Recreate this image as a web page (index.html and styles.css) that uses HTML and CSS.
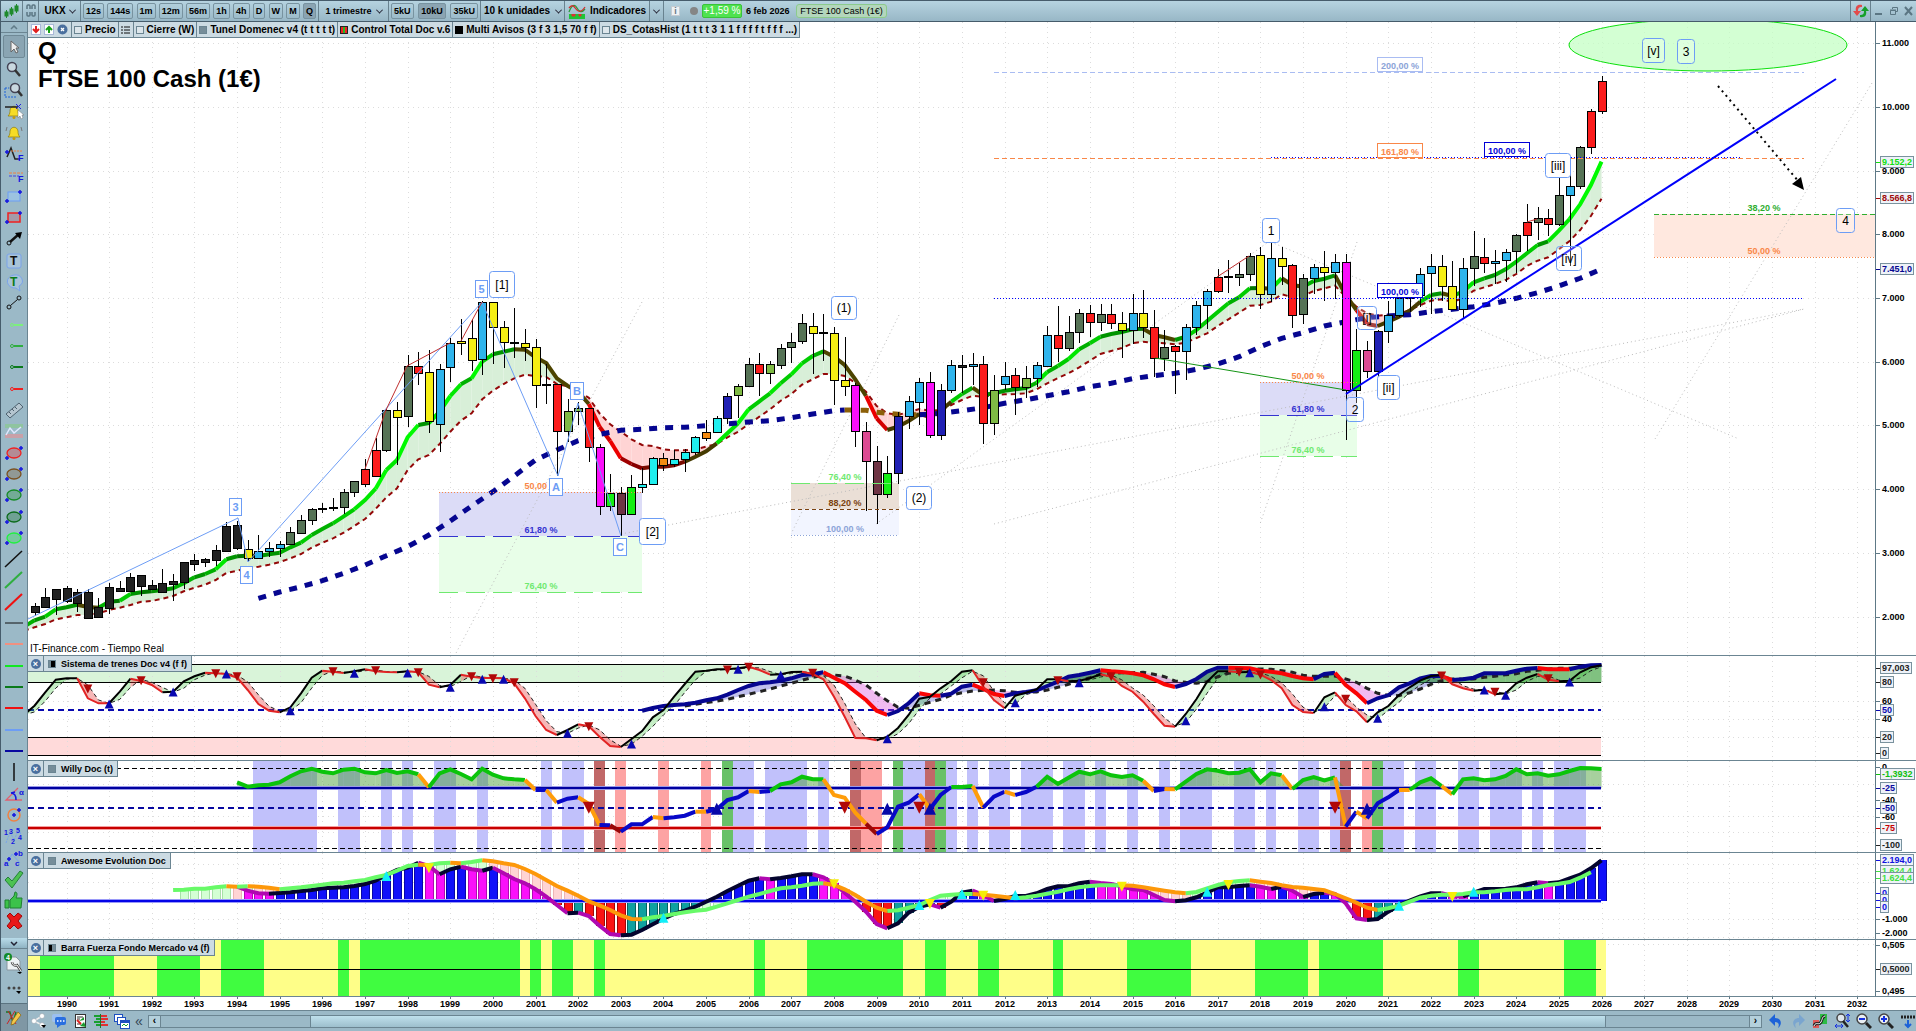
FILE: index.html
```html
<!DOCTYPE html>
<html lang="es">
<head>
<meta charset="utf-8">
<title>UKX - FTSE 100 Cash (1€)</title>
<link rel="stylesheet" href="styles.css">
</head>
<body>
<header class="topbar">
  <div class="cell cell-candles"><svg width="18" height="18" viewBox="0 0 18 18"><g fill="#1f8a2c" stroke="#1f8a2c"><path d="M3.500 8v8M8.500 5v9M13.500 2v9"/><rect x="2" y="10" width="3" height="4"/><rect x="7" y="7" width="3" height="5"/><rect x="12" y="4" width="3" height="5"/></g></svg></div>
  <div class="cell cell-link"><svg width="10" height="16" viewBox="0 0 10 16" fill="none" stroke="#5b7683" stroke-width="1.500"><path d="M1 6V3a1 1 0 0 1 1-1h1a1 1 0 0 1 1 1v3M6 6V3a1 1 0 0 1 1-1h1a1 1 0 0 1 1 1v3M1 9v3a1 1 0 0 0 1 1h1a1 1 0 0 0 1-1V9M6 9v3a1 1 0 0 0 1 1h1a1 1 0 0 0 1-1V9"/></svg></div>
  <button class="cell drop cell-symbol">UKX<i class="chev"></i></button>
  <div class="cell periods">
    <button>12s</button><button>144s</button><button>1m</button><button>12m</button><button>56m</button><button>1h</button><button>4h</button><button>D</button><button>W</button><button>M</button><button class="on">Q</button>
  </div>
  <button class="cell drop cell-tf">1 trimestre<i class="chev"></i></button>
  <div class="cell periods units"><button>5kU</button><button class="on">10kU</button><button>35kU</button></div>
  <button class="cell drop cell-units">10 k unidades<i class="chev"></i></button>
  <button class="cell drop cell-ind"><svg width="18" height="17" viewBox="0 0 18 17"><path d="M1 9c3-8 6-8 8-4s5 5 8 1" fill="none" stroke="#2a9a3a" stroke-width="1.300"/><path d="M1 5c3-4 5-2 7 1s5 4 9-2" fill="none" stroke="#d03030" stroke-width="1.300"/><rect x="1" y="11" width="16" height="5" fill="#1fc437"/><path d="M4 11v2h3v-2M11 11v2h2v-2" fill="#d33" stroke="#d33"/></svg>Indicadores</button>
  <button class="cell drop cell-more" aria-label="Más"><i class="chev"></i></button>
  <div class="status">
    <span class="info">i</span><span class="dot"></span><span class="pct">+1,59 %</span><b>6 feb 2026</b><span class="name">FTSE 100 Cash (1€)</span>
  </div>
  <button class="cell cell-sync" aria-label="Actualizar"><svg width="18" height="16" viewBox="0 0 18 16"><path d="M10 2C5 1 3 4 4 8H1l4 5 4-5H6c0-3 1-4 4-4z" fill="#e24b4b"/><path d="M8 14c5 1 7-2 6-6h3l-4-5-4 5h3c0 3-1 4-4 4z" fill="#16a02a"/></svg></button>
  <div class="win">
    <button aria-label="Minimizar"><svg width="10" height="10"><path d="M1 8h7" stroke="#5b7683" stroke-width="2"/></svg></button>
    <button aria-label="Restaurar"><svg width="10" height="10" fill="none" stroke="#5b7683"><path d="M3.500 3V1.500h5v4H7M1.500 4.500h5v4h-5zM1 4h6"/></svg></button>
    <button aria-label="Cerrar"><svg width="10" height="10"><path d="M1 1l7 8M8 1L1 9" stroke="#5b7683" stroke-width="2"/></svg></button>
  </div>
</header>
<div class="work">
  <nav class="side" aria-label="Herramientas">
    <button class="scroll up" aria-label="Subir"><svg width="8" height="5"><path d="M1 4l3-3 3 3" fill="none" stroke="#607b88" stroke-width="1.500"/></svg></button>
    <div class="tools" id="tools"></div>
    <button class="scroll" aria-label="Bajar"><svg width="8" height="5"><path d="M1 1l3 3 3-3" fill="none" stroke="#223" stroke-width="1.500"/></svg></button>
    <button class="tool big" aria-label="Notas"><svg width="20" height="22" viewBox="0 0 20 22"><path d="M3 5h9l4 4v9H3z" fill="#eef2f5" stroke="#8a97a0"/><circle cx="4" cy="5" r="4" fill="#128a2a"/><text x="4" y="8" class="n4" text-anchor="middle">4</text><path d="M8 10c0 3 3 4 5 3l4 6" fill="none" stroke="#444" stroke-width="2.500"/><path d="M8 10c0 3 3 4 5 3l4 6" fill="none" stroke="#fff"/><path d="M13 20h5l-2 2z"/></svg></button>
    <button class="tool big" aria-label="Más herramientas"><svg width="20" height="12" viewBox="0 0 20 12"><circle cx="5" cy="4" r="1.500" fill="#444"/><circle cx="10" cy="4" r="1.500" fill="#444"/><circle cx="15" cy="4" r="1.500" fill="#444"/><path d="M12 7h5l-2 3z"/></svg></button>
    <button class="tool draw" aria-label="Dibujar"><svg width="18" height="18" viewBox="0 0 18 18"><path d="M1 3h4l3 11 3-11" fill="none" stroke="#177a25" stroke-width="1.300"/><path d="M3 2l8 13M10 2L2 15" stroke="#c22" fill="none"/><path d="M13 3l3 3-7 9-3 1 1-4z" fill="#f3c64a" stroke="#8a6410" stroke-width=".7"/></svg></button>
  </nav>
  <main class="charts">
    <section class="panel price"><svg class="plot" id="price"></svg><svg class="axis" id="price-axis"></svg>
      <div class="legend">
        <span class="box arrows"><svg width="10" height="11" viewBox="0 0 10 11"><rect x=".5" y=".5" width="9" height="10" fill="#fff" stroke="#a9b8d8"/><path d="M5 2v6M2 5l3 3 3-3" stroke="#e02020" stroke-width="2" fill="none"/></svg><svg width="10" height="11" viewBox="0 0 10 11"><rect x=".5" y=".5" width="9" height="10" fill="#fff" stroke="#a9b8d8"/><path d="M5 9V3M2 6l3-3 3 3" stroke="#18a018" stroke-width="2" fill="none"/></svg><svg width="11" height="11" viewBox="0 0 11 11"><circle cx="5.500" cy="5.500" r="5" fill="#4a6f9e"/><path d="M4 4l3 3M7 4L4 7" stroke="#fff" stroke-width="1.300"/></svg></span>
        <span class="box"><i class="sw"></i>Precio</span>
        <span class="box"><svg width="10" height="8"><path d="M0 1h2M3 1h6M0 4h2M3 4h6M0 7h2M3 7h6" stroke="#111"/></svg></span>
        <span class="box"><i class="sw"></i>Cierre (W)</span>
        <span class="box"><i class="sw grey"></i>Tunel Domenec v4 (t t t t t)</span>
        <span class="box"><i class="sw multi"></i>Control Total Doc v.6</span>
        <span class="box"><i class="sw black"></i>Multi Avisos (3 f 3 1,5 70 f f)</span>
        <span class="box"><i class="sw"></i>DS_CotasHist (1 t t t 3 1 1 f f f f t f f f ...)</span>
      </div>
      <h1 class="title">Q<br>FTSE 100 Cash (1€)</h1>
      <p class="source">IT-Finance.com - Tiempo Real</p>
    </section>
    <section class="panel trenes"><svg class="plot" id="trenes"></svg><svg class="axis" id="trenes-axis"></svg>
      <div class="legend sub"><button class="box x" aria-label="Cerrar"></button><span class="box"><i class="sw half"></i>Sistema de trenes Doc v4 (f f)</span></div></section>
    <section class="panel willy"><svg class="plot" id="willy"></svg><svg class="axis" id="willy-axis"></svg>
      <div class="legend sub"><button class="box x" aria-label="Cerrar"></button><span class="box"><i class="sw grey"></i>Willy Doc (t)</span></div></section>
    <section class="panel awesome"><svg class="plot" id="awesome"></svg><svg class="axis" id="awesome-axis"></svg>
      <div class="legend sub"><button class="box x" aria-label="Cerrar"></button><span class="box"><i class="sw grey"></i>Awesome Evolution Doc</span></div></section>
    <section class="panel barra"><svg class="plot" id="barra"></svg><svg class="axis" id="barra-axis"></svg>
      <div class="legend sub"><button class="box x" aria-label="Cerrar"></button><span class="box"><i class="sw half2"></i>Barra Fuerza Fondo Mercado v4 (f)</span></div></section>
    <section class="panel years"><svg class="plot" id="years"></svg><div class="axis corner"></div></section>
    <footer class="foot">
      <button aria-label="Compartir"><svg width="16" height="16" viewBox="0 0 16 16"><path d="M12 3L4 8l8 4" fill="none" stroke="#eee" stroke-width="1.500"/><g fill="#fff" stroke="#8a97a0" stroke-width=".5"><circle cx="12" cy="3" r="2.500"/><circle cx="4" cy="8" r="2.500"/><circle cx="12" cy="12" r="2.500"/></g><path d="M11 12h5l-2 3z"/></svg></button>
      <button aria-label="Chat"><svg width="16" height="16" viewBox="0 0 16 16"><rect x="1" y="1" width="10" height="8" rx="2" fill="#9cc0f0"/><rect x="4" y="4" width="11" height="8" rx="2" fill="#2a6fe0"/><path d="M6 12v3l4-3z" fill="#2a6fe0"/><path d="M6 8h1.500M9 8h1.500M12 8h1.500" stroke="#fff" stroke-width="1.500"/></svg></button>
      <button aria-label="Informe"><svg width="14" height="16" viewBox="0 0 14 16"><rect x="2.500" y="1.500" width="10" height="13" fill="#fff" stroke="#333"/><path d="M4 4h6M4 6h3M4 11h4" stroke="#333"/><path d="M6 8l5-4v3zM7 13l4-4 2 5z" fill="#1d9a2d"/><path d="M4 7l4 4" stroke="#d22" stroke-width="2"/></svg></button>
      <button aria-label="Libro de órdenes"><svg width="16" height="16" viewBox="0 0 16 16"><path d="M1 3h6M3 6h4M1 9h6M3 12h4" stroke="#18a030" stroke-width="2"/><path d="M8 3h6M8 6h7M8 9h4M8 12h7" stroke="#e03030" stroke-width="2"/><path d="M7.500 1v14" stroke="#187a28"/></svg></button>
      <button aria-label="Ventanas"><svg width="16" height="16" viewBox="0 0 16 16"><g fill="#fff" stroke="#1d4fc0"><rect x=".5" y="1.500" width="8" height="7"/><rect x="3.500" y="4.500" width="8" height="7"/><rect x="6.500" y="7.500" width="9" height="8"/></g><path d="M7 9h8" stroke="#1d4fc0" stroke-width="2"/><path d="M8 13l2-2 2 2 2-2" fill="none" stroke="#18a030"/></svg></button>
      <span class="fold">«</span>
      <div class="hscroll"><button aria-label="Izquierda">‹</button><i class="before"></i><i class="thumb"></i><i class="after"></i><button aria-label="Derecha">›</button></div>
      <button class="r" aria-label="Deshacer"><svg width="16" height="16" viewBox="0 0 16 16"><path d="M7 1v4c6 0 8 6 3 10 2-4 0-6-3-6v4L1 7z" fill="#1d62d8"/></svg></button>
      <button class="r" aria-label="Rehacer"><svg width="16" height="16" viewBox="0 0 16 16"><path d="M9 1v4C3 5 1 11 6 15c-2-4 0-6 3-6v4l6-6z" fill="#7aa5cf"/></svg></button>
      <button class="r" aria-label="Ajustar"><svg width="16" height="16" viewBox="0 0 16 16"><rect x="1" y="7" width="6" height="8" fill="#e05a5a"/><rect x="8" y="1" width="7" height="10" fill="#2dbb45"/><path d="M2 13c2-5 5 0 7-4s1-5 4-6" stroke="#222" stroke-width="3" fill="none"/><path d="M2 13c2-5 5 0 7-4s1-5 4-6" stroke="#fff" fill="none"/></svg></button>
      <button class="r" aria-label="Escala"><svg width="16" height="16" viewBox="0 0 16 16"><circle cx="7" cy="5" r="4" fill="#dfe8ee" stroke="#444" stroke-width="1.500"/><path d="M9 8l5 6" stroke="#222" stroke-width="2.500"/><path d="M1 13h8M1 13l2-2M1 13l2 2M9 13l-2-2M9 13l-2 2M14 1v8M14 1l-2 2M14 1l2 2M14 9l-2-2M14 9l2-2" stroke="#1530e0" fill="none"/></svg></button>
      <button class="r" aria-label="Alejar"><svg width="16" height="16" viewBox="0 0 16 16"><circle cx="6" cy="6" r="5" fill="#e8eef2" stroke="#444" stroke-width="1.500"/><path d="M10 10l5 5" stroke="#222" stroke-width="3"/><path d="M3 6h6" stroke="#1530e0" stroke-width="2"/></svg></button>
      <button class="r" aria-label="Acercar"><svg width="16" height="16" viewBox="0 0 16 16"><circle cx="6" cy="6" r="5" fill="#e8eef2" stroke="#444" stroke-width="1.500"/><path d="M10 10l5 5" stroke="#222" stroke-width="3"/><path d="M3 6h6M6 3v6" stroke="#1530e0" stroke-width="2"/></svg></button>
      <button class="r" aria-label="Espaciado"><svg width="16" height="16" viewBox="0 0 16 16"><path d="M1 4h14" stroke="#222" stroke-width="3" stroke-dasharray="2 1"/><path d="M8 7v6M5 11l3 3 3-3" stroke="#1d62d8" stroke-width="2" fill="none"/></svg></button>
    </footer>
  </main>
</div>
<script src="chart.js"></script>
</body>
</html>
```
FILE: styles.css
```css
* { box-sizing: border-box; }
html, body { height: 100%; }
body { margin: 0; display: flex; flex-direction: column; overflow: hidden; background: #fff; font: 10px/12px "Liberation Sans", Arial, sans-serif; color: #000; }
button { font: inherit; color: inherit; padding: 0; margin: 0; border: 0; background: none; display: flex; align-items: center; justify-content: center; }
svg { display: block; flex: none; }

.topbar { height: 22px; flex: none; display: flex; background: linear-gradient(#b6d3e0, #98b7c6); border: solid #465c6b; border-width: 1px 0 1px 1px; }
.cell { flex: none; display: flex; align-items: center; justify-content: center; border-right: 1px solid #68828f; font-weight: bold; white-space: nowrap; }
.cell-candles { width: 22px; }
.cell-link { width: 16px; }
.cell-symbol { width: 42px; gap: 4px; }
.chev { width: 5px; height: 5px; border: solid #223; border-width: 0 1px 1px 0; transform: rotate(45deg) translate(-1px, -1px); }
.periods { gap: 3px; padding: 0 2px; font-size: 9px; width: 238px; justify-content: space-between; }
.periods button { height: 16px; padding: 0 2px; border: 1px solid #7893a0; border-radius: 2px; font-weight: bold; }
.periods .on { background: #8ba4b2; }
.cell-tf { width: 70px; gap: 5px; font-size: 9px; }
.units { width: 92px; }
.cell-units { width: 84px; gap: 6px; }
.cell-ind { width: 85px; gap: 4px; }
.cell-more { width: 14px; }
.status { flex: 1; display: flex; align-items: center; gap: 4px; padding-left: 7px; font-size: 9px; white-space: nowrap; }
.info { width: 9px; height: 10px; margin-right: 6px; background: #eef2f4; color: #678; text-align: center; font-weight: bold; line-height: 9px; border: 1px solid #c3ccd2; }
.dot { width: 8px; height: 8px; border-radius: 4px; background: #858585; }
.pct { width: 40px; height: 14px; background: #4fe24f; color: #fff; font-size: 10px; border: 1px solid #39c339; border-radius: 2px; text-align: center; }
.status b { font-size: 9px; width: 46px; }
.name { width: 91px; height: 14px; background: #b3d6bc; border: 1px solid #8ccb8c; border-radius: 3px; text-align: center; }
.cell-sync { width: 21px; border-left: 1px solid #68828f; }
.win { width: 45px; flex: none; display: flex; align-items: center; justify-content: space-around; }

.work { flex: 1; display: flex; min-height: 0; }
.side { width: 28px; flex: none; display: flex; flex-direction: column; background: #9bb9c7; border: solid #6b8592; border-width: 0 1px; border-left-color: #465c6b; }
.scroll { height: 11px; flex: none; background: linear-gradient(#b9dcea, #8fb3c3); border-bottom: 1px solid #6b8592; }
.scroll.up { background: none; }
.tools { flex: 1; min-height: 0; display: flex; flex-direction: column; padding: 2px 2px 6px; }
.tool { flex: 1; min-height: 0; }
.tool.active { background: #8aa5b3; border: 1px solid #6f8996; border-radius: 2px; }
.tool.big { flex: none; height: 27px; }
.tool.draw { flex: none; height: 28px; background: #7f97a4; border-top: 1px solid #5b7380; }
.n4 { font: bold 7px "Liberation Sans", sans-serif; fill: #fff; }

.charts { flex: 1; min-width: 0; display: flex; flex-direction: column; }
.panel { position: relative; min-height: 0; display: flex; border-top: 1px solid #6b8592; }
.plot { flex: 1; min-width: 0; width: 0; height: 100%; }
.axis { width: 41px; height: 100%; border-left: 1px solid #5e7986; }
.price { flex: 633 1 0; border-top: 0; }
.trenes { flex: 104 1 0; }
.willy { flex: 91 1 0; }
.awesome { flex: 86 1 0; }
.barra { flex: 56 1 0; }
.years { flex: none; height: 14px; }
.years .axis { border-left: 0; }
.legend { position: absolute; left: 0; top: 0; display: flex; height: 16px; background: #ccdbe3; border-bottom: 1px solid #6b8592; font-weight: bold; white-space: nowrap; }
.box { display: flex; align-items: center; gap: 3px; padding: 0 2px; border-right: 1px solid #6b8592; }
.legend.sub { font-size: 9px; }
.sub .box { gap: 5px; padding: 0 4px; }
.arrows { gap: 3px; padding: 0 3px; }
.sw { width: 8px; height: 8px; border: 1px solid #6b8592; background: #dde6eb; }
.sw.grey { background: #768d99; }
.sw.black { background: #000; border-color: #000; }
.sw.multi { border-color: #222; background: linear-gradient(90deg, #e22 35%, #2b2 35% 70%, #e22 70%); }
.sw.half { background: linear-gradient(90deg, #768d99 40%, #000 40%); }
.sw.half2 { background: linear-gradient(90deg, #000 50%, #768d99 50%); }
.sub .box.x { width: 16px; padding: 0; }
.box.x::before { content: "×"; width: 10px; height: 10px; border-radius: 5px; background: #4a6f9e; color: #fff; line-height: 10px; text-align: center; }
.title { position: absolute; left: 10px; top: 15px; margin: 0; font-size: 24px; line-height: 28px; }
.source { position: absolute; left: 2px; bottom: 0; margin: 0; }

.foot { height: 21px; flex: none; display: flex; align-items: center; gap: 5px; padding-left: 2px; background: #9bb9c7; border-top: 1px solid #6b8592; }
.foot button { width: 16px; flex: none; }
.foot .r { width: 17px; }
.fold { width: 8px; color: #345; font-size: 14px; }
.hscroll { flex: 1; height: 13px; display: flex; border: 1px solid #6b8592; }
.hscroll button { width: 12px; background: #b4d0dc; border: solid #6b8592; border-width: 0 1px 0 0; font-weight: bold; }
.hscroll button:last-child { border-width: 0 0 0 1px; }
.before { flex: 150; }
.thumb { flex: 1298; background: linear-gradient(#bfe0ec, #9dbfcd); border: solid #6b8592; border-width: 0 1px; }
.after { flex: 144; }

.lbl { font: bold 9px "Liberation Sans", sans-serif; }
.wave { font: 12px "Liberation Sans", sans-serif; }
.wave.s { font-weight: bold; font-size: 11px; }
.crisp { shape-rendering: crispEdges; }
```
FILE: chart.js
```js
// ---- data: one entry per quarter, k = quarters since 1990; levels in thirds of a pixel ----
const CANDLES = `1088 1098 1115 1128 k|1045 1071 1100 1100 k|1047 1047 1077 1125 k|1038 1045 1082 1090 k|1047 1056 1088 1116 k|1048 1056 1133 1137 k|1074 1101 1130 1130 k|1029 1041 1103 1122 k|1022 1044 1052 1052 k|999 1011 1052 1052 k|1005 1005 1037 1068 k|1019 1035 1047 1047 k|988 1029 1057 1057 k|1003 1023 1031 1083 k|965 965 1025 1047 k|942 960 971 992 k|954 957 966 980 k|915 930 960 978 k|846 857 932 936 k|843 855 923 930 k|900 928 955 962 y|885 934 955 955 b|905 925 934 950 b|903 913 925 950 b|861 877 913 915 g|825 841 880 880 g|804 808 841 855 g|788 804 806 818 k|774 802 805 812 k|747 757 802 822 g|722 724 757 770 g|657 688 733 740 r|594 631 709 711 r|508 511 631 635 g|487 511 532 675 y|345 379 529 560 g|336 379 398 434 r|330 397 544 578 y|371 388 553 635 b|294 310 382 426 b|237 304 310 345 y|238 295 361 392 y|184 187 358 404 b|187 187 262 372 y|243 262 307 384 y|204 307 310 354 k|267 310 322 363 y|297 322 436 504 y|372 433 436 492 k|433 433 574 708 r|477 514 574 606 G|487 505 514 555 G|505 505 622 666 r|613 622 799 824 m|702 760 799 812 L|741 760 821 888 w|705 742 821 821 L|685 731 742 758 c|652 655 731 731 c|640 655 674 692 o|631 658 673 680 c|628 637 658 695 c|589 592 637 645 c|541 577 593 602 o|529 535 577 580 c|460 469 535 552 n|433 439 466 535 G|354 373 439 439 g|339 373 398 467 r|363 373 398 432 G|313 325 374 386 g|279 307 322 369 g|221 250 304 312 g|219 259 280 402 y|222 276 278 363 k|261 280 421 495 y|291 421 437 467 y|430 436 574 621 m|546 574 664 813 p|618 664 761 852 w|648 700 761 773 L|515 529 700 731 n|468 484 529 567 b|415 427 485 556 b|396 427 586 594 m|433 451 586 600 n|360 376 451 459 b|345 376 380 460 k|339 373 379 434 b|348 373 550 612 r|405 451 550 585 G|366 409 433 450 b|384 406 442 525 r|378 415 442 474 G|366 376 415 440 b|258 286 379 380 b|198 286 325 366 r|228 277 325 334 g|207 220 277 309 g|195 220 247 291 r|192 223 247 274 g|192 223 250 267 r|216 250 271 354 y|162 220 269 312 b|150 220 262 295 y|210 262 355 411 r|270 321 355 393 g|315 319 334 462 r|252 262 334 420 b|183 196 262 285 b|147 154 196 267 b|87 112 154 159 r|60 109 111 158 k|70 103 112 138 g|39 49 103 123 g|21 46 163 207 y|0 55 163 186 b|21 55 78 135 y|72 76 226 264 r|103 115 223 252 g|73 82 115 162 b|33 82 95 183 y|43 67 95 177 b|43 67 451 600 m|267 331 451 490 L|304 331 392 415 p|270 274 392 410 n|184 226 274 310 b|175 175 226 230 b|140 158 175 215 b|85 103 165 200 b|43 79 98 222 b|45 79 139 183 y|63 139 208 210 y|55 85 208 235 b|-27 49 85 138 g|-6 52 70 99 r|30 64 70 133 b|28 37 61 126 b|-17 -14 34 99 g|-108 -53 -14 33 r|-99 -65 -53 0 g|-93 -65 -47 -12 r|-210 -134 -47 -42 g|-220 -161 -134 78 b|-282 -278 -161 -153 g|-393 -386 -278 -258 r|-492 -476 -386 -378 r`
  .split('|').map((s, i) => { const p = s.split(' '); return { k: i - 3, h: +p[0], t: +p[1], b: +p[2], l: +p[3], c: p[4] }; });
const COLORS = { k: '#222', y: '#f5ef14', b: '#2fb4ec', g: '#567356', r: '#fb1c1c', G: '#7fba45', m: '#fb0ffb', L: '#14ee14', w: '#6e3444', n: '#2020b4', c: '#20eeee', o: '#f58b10', p: '#dc4a92' };

const FAST = [1160,1141,1130,1108,1102,1094,1101,1103,1085,1082,1062,1057,1054,1050,1045,1030,1012,1002,988,958,949,947,948,943,938,922,908,885,867,850,829,808,780,746,690,660,592,555,549,515,468,433,415,365,343,335,328,329,352,369,415,437,455,492,560,603,655,672,685,680,680,676,665,650,634,610,580,550,508,484,460,430,403,370,348,334,350,375,418,468,535,570,560,543,522,530,512,485,462,443,465,460,452,448,444,428,396,378,357,328,310,290,282,276,268,266,285,292,300,290,270,243,216,190,172,145,144,146,115,135,140,123,116,106,165,210,252,258,245,230,212,185,165,160,168,155,127,115,105,88,65,40,15,4,-28,-63,-107,-165,-235];
const SLOW = [1172,1162,1152,1138,1132,1125,1125,1120,1110,1103,1095,1085,1083,1076,1068,1054,1043,1034,1020,999,992,985,980,974,966,955,942,923,908,895,878,858,837,807,772,745,690,658,645,612,575,542,520,478,452,432,415,404,408,411,432,439,455,473,520,553,575,598,615,618,628,631,631,628,620,612,592,575,552,530,508,482,462,434,418,402,402,408,428,455,498,520,524,517,507,512,510,495,480,467,470,465,463,462,460,448,430,414,400,382,362,342,333,324,310,305,308,310,313,308,294,280,258,238,218,197,195,185,163,172,168,153,145,137,170,200,220,227,225,222,210,195,182,178,185,175,152,142,132,120,102,78,62,52,28,3,-30,-72,-124];
const TREND = [[18,1075],[20,1056],[22,1040],[24,1022],[26,1000],[28,975],[30,947],[32,920],[34,885],[36,843],[38,798],[40,755],[42,708],[44,660],[46,630],[48,602],[50,583],[52,571],[54,568],[56,563],[58,562],[60,557],[62,552],[64,546],[66,542],[68,533],[70,522],[72,512],[73,510],[75,511],[76,517],[78,523],[80,524],[82,520],[84,512],[86,503],[88,490],[90,479],[92,467],[94,455],[96,440],[98,430],[100,416],[102,407],[104,400],[106,388],[108,372],[110,350],[112,320],[114,295],[116,278],[118,258],[120,245],[122,233],[124,228],[126,224],[128,215],[130,208],[132,200],[134,190],[136,175],[138,158],[140,138],[142,115],[144,87]];

const ST = [225,197,157,119,115,115,175,190,190,155,116,123,135,157,155,124,109,98,100,102,113,150,192,212,217,202,160,113,92,95,99,94,88,94,96,97,94,97,134,142,135,104,110,114,114,115,130,175,228,270,285,270,253,259,290,318,321,297,273,232,210,170,132,95,92,88,88,85,80,90,104,103,96,95,102,118,170,230,294,295,301,290,264,225,176,170,145,123,95,91,140,180,205,167,158,148,118,118,124,122,115,103,110,138,155,185,222,257,260,222,177,125,94,94,97,96,104,120,145,195,216,219,172,157,195,214,247,217,198,165,142,122,108,105,133,145,152,149,163,160,130,113,102,119,124,122,97,82,76];
const TH = [212,204,198,195,193,188,181,175,164,150,138,130,127,122,115,105,103,97,113,130,155,180,212,225,213,190,160,166,167,161,140,134,147,162,168,160,156,151,138,125,110,105,98,91,94,96,100,106,118,133,141,132,117,95,83,83,84,85,92,95,100,108,115,118,102,98,135,160,190,175,166,142,130,115,108,108,120,118,113,100,100,100,92,86,84,88,88,88,80,76,75];
const TD = [198,193,188,183,178,170,163,155,147,138,130,121,112,106,105,108,120,135,160,182,202,205,196,187,178,165,158,153,151,150,152,157,157,156,150,142,133,122,113,103,100,98,98,97,103,110,123,127,130,125,110,100,96,88,87,88,92,97,106,109,109,108,117,127,145,160,166,167,158,147,133,122,117,117,117,112,109,104,101,94,91,87,85,85,84,80,76];

const WILLY = [427,440,436,434,427,409,394,386,395,400,389,386,397,400,390,399,394,403,442,400,388,402,418,386,404,415,418,420,450,450,488,476,472,492,555,556,575,553,553,531,535,532,527,515,515,508,480,472,453,456,453,433,427,410,418,418,465,473,518,551,582,562,500,488,463,507,465,441,441,438,503,470,455,465,456,440,410,432,413,395,403,394,406,411,406,422,453,447,448,425,402,388,392,400,398,388,427,400,406,447,420,411,421,412,560,515,535,490,472,450,450,427,415,438,463,418,415,421,418,408,388,403,400,407,403,393,384,385,387];
const ORANGE = [33,43,45,48,49,55,59,64,71,72,73,74,80,85,88,101,103,114,119,121,125,129];

const AS = [750,749,746,746,742,739,740,739,740,743,748,745,742,738,734,730,728,724,720,712,705,692,678,674,675,670,668,670,666,661,664,670,675,687,702,720,738,752,767,784,796,810,826,837,838,832,828,822,817,812,809,800,790,780,770,762,753,745,742,737,731,730,735,748,765,785,803,813,811,803,795,780,767,764,762,762,764,767,771,775,772,767,761,755,748,742,738,736,736,736,737,742,747,752,757,760,756,745,735,727,723,721,725,729,736,741,743,747,751,762,775,788,803,810,805,797,785,773,767,764,764,762,757,757,754,750,748,748,742,735,731,726,713,697];
const AM = [740,752,760,761,759,757,753,750,745,743,742,738,732,722,705,690,683,668,678,703,688,680,688,692,683,700,717,730,748,770,795,820,818,828,857,882,886,884,870,853,836,822,812,800,785,770,753,737,722,715,718,714,709,703,703,712,730,758,785,815,852,865,850,818,800,793,803,785,758,752,765,783,777,768,768,760,747,739,739,730,725,729,732,739,748,750,765,780,784,781,772,758,742,742,738,736,740,747,740,752,771,762,758,762,790,835,840,837,815,796,782,769,760,760,768,770,758,747,747,746,742,733,727,730,727,715,704,685,661];

// ---- drawing helpers ----
function plot(id, top, height, base) {
  const el = document.getElementById(id), w = el.clientWidth, h = el.clientHeight;
  const sx = w / 1847, sy = h / height;
  const p = { out: [], w, h, sx, sy, el,
    X: k => (38.5 + 10.66 * k) * sx,
    Y: t => (base + t / 3 - top) * sy,
    px: x => (x - 28) * sx,
    py: y => (y - top) * sy,
    add: s => p.out.push(s),
    line(x1, y1, x2, y2, a) { p.add(`<path d="M${x1} ${y1}L${x2} ${y2}" ${a}/>`); },
    hl(y, x1, x2, c, a = '') { const v = Math.round(p.py(y)) + (a.includes('stroke-width') ? 0 : .5); p.add(`<path class="crisp" d="M${p.px(x1)} ${v}H${p.px(x2)}" stroke="${c}" ${a}/>`); },
    rect(x1, y1, x2, y2, a) { const l = Math.round(x1), t = Math.round(y1); p.add(`<rect class="crisp" x="${l}" y="${t}" width="${Math.max(0, Math.round(x2) - l)}" height="${Math.max(0, Math.round(y2) - t)}" ${a}/>`); },
    pts: (v, from) => v.map((t, i) => [p.X(from + i), p.Y(t)]),
    path: (pts, a) => p.add(`<path d="M${pts.map(q => q[0].toFixed(1) + ' ' + q[1].toFixed(1)).join('L')}" fill="none" ${a}/>`),
    segs(pts, color, width) {
      let run = [pts[0]], cur = color(0);
      for (let i = 0; i < pts.length - 1; i++) {
        const c = color(i);
        if (c !== cur) { p.path(run, `stroke="${cur}" stroke-width="${width}"`); run = [pts[i]]; cur = c; }
        run.push(pts[i + 1]);
      }
      p.path(run, `stroke="${cur}" stroke-width="${width}"`);
    },
    between(a, b, color) {
      for (let i = 0; i < a.length - 1; i++) {
        const c = color(i);
        if (c) p.add(`<path d="M${a[i]}L${a[i + 1]}L${b[i + 1]}L${b[i]}Z" fill="${c}"/>`);
      }
    },
    tri(k, t, up, c, s = 5) { const x = p.X(k), y = p.Y(t), d = up ? s : -s; p.add(`<path d="M${x - s} ${y + d}H${x + s}L${x} ${y - d}Z" fill="${c}"/>`); },
    text(x, y, s, c, anchor = 'middle', cls = 'lbl') { p.add(`<text class="${cls}" x="${x}" y="${y}" fill="${c}" text-anchor="${anchor}">${s}</text>`); },
    years() { for (let y = 0; y <= 42; y++) { const x = Math.round(p.X(y * 4)) + .5; p.add(`<path class="crisp" d="M${x} 0V${h}" stroke="#dcdcdc" stroke-dasharray="1 4"/>`); } },
    gridH(ys) { ys.forEach(y => p.hl(y, 28, 1875, '#dcdcdc', 'stroke-dasharray="1 4"')); },
    done() { el.innerHTML = p.out.join(''); }
  };
  return p;
}
const rising = (v, up, down) => { let last = up; return v.slice(1).map((t, i) => (last = t < v[i] ? up : t > v[i] ? down : last)); };

function axis(id, top, height, ticks, boxes) {
  const el = document.getElementById(id), sy = el.clientHeight / height;
  const Y = y => Math.round((y - top) * sy);
  let s = ticks.map(([t, y]) => `<path class="crisp" d="M0 ${Y(y) + .5}h4" stroke="#5e7986"/><text class="lbl" x="6" y="${Y(y) + 3}">${t}</text>`).join('');
  s += boxes.map(([t, y, c, w]) => `<path class="crisp" d="M0 ${Y(y) + .5}h4" stroke="${c}"/><rect class="crisp" x="4.500" y="${Y(y) - 5.5}" width="${w}" height="11" fill="#eef2f8" stroke="#7a929e"/><text class="lbl" x="6" y="${Y(y) + 3}" fill="${c}">${t}</text>`).join('');
  el.innerHTML = s;
}

function drawPrice() {
  const p = plot('price', 22, 633, 240), { X, Y, px, py } = p;
  const prices = [11, 10, 9, 8, 7, 6, 5, 4, 3, 2].map(n => [n + '.000', 298 + (7 - n) * 63.7]);
  p.years(); p.gridH(prices.map(q => q[1]));
  // projection zones
  [[439, 492, 642, 536, '#dcdcf7'], [439, 536, 642, 592, '#e8fee8'], [791, 483, 899, 509, '#eadfd6'], [791, 509, 899, 535, '#f2f5ff'],
   [1260, 382, 1357, 415, '#dcdcf7'], [1260, 415, 1357, 456, '#e8fee8'], [1654, 214, 1875, 257, '#ffe8df']]
    .forEach(([a, b, c, d, f]) => p.rect(px(a), py(b), px(c), py(d), `fill="${f}"`));
  [[642,302,455,655],[899,315,791,534],[621,534,1804,309],[994,524,1804,309],[876,524,1271,240],[1271,242,1739,439],[1357,242,1260,524],[1872,83,1655,439]]
    .forEach(([a, b, c, d]) => p.line(px(a), py(b), px(c), py(d), 'stroke="#bcbcbc" stroke-dasharray="1 3"'));
  p.add(`<ellipse cx="${px(1708)}" cy="${py(45)}" rx="${139 * p.sx}" ry="${26 * p.sy}" fill="#c4ffc4" fill-opacity=".75" stroke="#0de00d"/>`);
  // cloud and averages
  const f = p.pts(FAST, -4), s = p.pts(SLOW, -4);
  p.between(f, s, i => (FAST[i] + FAST[i + 1] <= SLOW[i] + SLOW[i + 1]) ? '#d8efd8' : '#ffd4d4');
  p.path(s, 'stroke="#930808" stroke-width="2" stroke-dasharray="5 4"');
  p.segs(f, i => {
    const d = FAST[i] - FAST[i + 1], above = FAST[i] <= SLOW[i];
    if (d >= 0) return above ? `rgb(0,${Math.min(250, 120 + Math.round(d / 8) * 28)},0)` : (i < 62 ? '#7a0c00' : '#453a00');
    return above ? '#4d4400' : `rgb(${Math.min(235, 110 + Math.round(-d / 10) * 25)},0,0)`;
  }, 4);
  const tr = TREND.map(q => [X(q[0]), Y(q[1])]), dash = 'stroke-width="5" stroke-dasharray="8 8"';
  p.path(tr.slice(0, 29), `stroke="#060690" ${dash}`);
  p.path(tr.slice(28, 33), `stroke="#8c6008" ${dash}`);
  p.path(tr.slice(32), `stroke="#060690" ${dash}`);
  CANDLES.forEach(c => {
    const x = Math.round(X(c.k)), t = Math.round(Y(c.t)), b = Math.max(t + 1, Math.round(Y(c.b)));
    p.add(`<path class="crisp" d="M${x + .5} ${Math.round(Y(c.h))}V${Math.round(Y(c.l))}" stroke="#000"/><rect class="crisp" x="${x - 3.5}" y="${t + .5}" width="8" height="${b - t}" fill="${COLORS[c.c]}" stroke="#000"/>`);
  });
  const poly = (a, attr) => p.path(a.map(([x, y]) => [px(x), py(y)]), attr);
  const blue = 'stroke="#6d9df5"', red = 'stroke="#c03030"';
  poly([[28, 619], [238, 518], [248, 562], [482, 302], [558, 476], [578, 403], [621, 536]], blue);
  poly([[365, 469], [386, 410], [407, 366], [450, 343]], red);
  poly([[461, 341], [482, 302]], red);
  poly([[1217, 277], [1249, 256]], red);
  poly([[1527, 222], [1537, 219]], red);
  poly([[1155, 358], [1346, 390]], 'stroke="#149414"');
  poly([[1346, 394], [1836, 79]], 'stroke="#0000fa" stroke-width="2"');
  poly([[1718, 86], [1799, 182]], 'stroke="#000" stroke-width="2" stroke-dasharray="2 4"');
  p.add(`<path d="M${px(1804)} ${py(190)}l-12 -6l9 -7z"/>`);
  // level lines
  p.hl(72, 994, 1804, '#a9bcf2', 'stroke-dasharray="5 3"');
  p.hl(158, 994, 1804, '#f98748', 'stroke-dasharray="5 3"');
  p.hl(157, 1271, 1740, '#0000ff', 'stroke-dasharray="1 2"');
  p.hl(298, 994, 1804, '#0000ff', 'stroke-dasharray="1 2"');
  const OR = '#f98748', BL = '#3434d0', GR = '#6fe96f', BR = '#7a4210', LB = '#8ca4d8';
  [[492, 439, 642, OR, '1 2'], [536, 439, 642, BL, '19 8'], [592, 439, 642, GR, '19 8'], [483, 791, 899, GR, '19 8'], [509, 791, 899, BR, '4 3'], [535, 791, 899, LB, '1 2'],
   [382, 1260, 1357, OR, '1 2'], [415, 1260, 1357, BL, '19 8'], [456, 1260, 1357, GR, '19 8'], [214, 1654, 1875, '#2fae2f', '5 3'], [257, 1654, 1875, OR, '1 2']]
    .forEach(([y, a, b, c, d]) => p.hl(y, a, b, c, `stroke-dasharray="${d}"`));
  [[541, 489, '50,00 %', OR], [541, 533, '61,80 %', BL], [541, 589, '76,40 %', GR], [845, 480, '76,40 %', GR], [845, 506, '88,20 %', BR], [845, 532, '100,00 %', LB],
   [1308, 379, '50,00 %', OR], [1308, 412, '61,80 %', BL], [1308, 453, '76,40 %', GR], [1764, 211, '38,20 %', '#2fae2f'], [1764, 254, '50,00 %', OR]]
    .forEach(([x, y, t, c]) => p.text(px(x), py(y), t, c));
  [[1400, 57, '200,00 %', LB, '#a9bcf2'], [1400, 143, '161,80 %', OR, OR], [1507, 142, '100,00 %', '#0000d8', '#0000d8'], [1400, 283, '100,00 %', '#0000d8', '#0000d8']]
    .forEach(([x, y, t, c, b]) => { const l = Math.round(px(x)) - 22.5, m = Math.round(py(y)) + .5; p.add(`<rect x="${l}" y="${m}" width="45" height="14" fill="#fff" stroke="${b}"/>`); p.text(l + 22.5, m + 11, t, c); });
  // wave counts: x, y, w, h, text, style (s = small, n = see-through)
  [[490,271,25,26,'[1]',''],[476,280,12,17,'5','s'],[230,498,12,17,'3','s'],[241,566,12,17,'4','s'],[550,478,13,17,'A','s'],[571,382,13,17,'B','s'],[614,538,13,17,'C','s'],[640,518,26,26,'[2]',''],[832,296,25,23,'(1)',''],[907,486,25,23,'(2)',''],[1263,218,17,24,'1',''],[1347,397,17,24,'2','n'],[1378,375,22,24,'[ii]',''],[1358,306,19,23,'[i]','n'],[1546,153,25,24,'[iii]',''],[1557,246,25,24,'[iv]','n'],[1643,38,22,24,'[v]','n'],[1678,39,17,24,'3','n'],[1837,208,18,24,'4','n']]
    .forEach(([x, y, w, h, t, k]) => {
      const l = Math.round(px(x)) - .5, m = Math.round(py(y)) + .5;
      p.add(`<rect x="${l}" y="${m}" width="${w}" height="${h}" rx="${k === 's' ? 0 : 3}" fill="#fff" fill-opacity="${k === 'n' ? .25 : 1}" stroke="#6d9df5"/>`);
      p.text(l + w / 2, m + h / 2 + 4, t, k === 's' ? '#6d9df5' : '#000', 'middle', 'wave ' + k);
    });
  p.done();
  axis('price-axis', 22, 633, prices, [['9.152,2', 162, '#10e010', 33], ['8.566,8', 198, '#a00808', 33], ['7.451,0', 269, '#060690', 33]]);
}

function drawTrenes() {
  const p = plot('trenes', 656, 104, 640), { X, Y, px } = p, end = 1601;
  p.rect(0, Y(72), px(end), Y(127), 'fill="#d9f4d9"');
  p.rect(0, Y(292), px(end), Y(346), 'fill="#ffdada"');
  p.years(); p.gridH([701, 719, 737]);
  [664, 682, 737, 755].forEach(y => p.hl(y, 28, end, '#000'));
  p.hl(710, 28, end, '#0808b0', 'stroke-width="2" stroke-dasharray="6 4"');
  const st = p.pts(ST, -4), sg = p.pts(ST.map((v, i) => (v + (ST[i - 1] || v) * 2) / 3), -4);
  const th = p.pts(TH, 54), td = p.pts(TD, 58), thc = TH.slice(4);
  p.between(th.slice(4), td, i => thc[i] + thc[i + 1] <= TD[i] + TD[i + 1] ? 'rgba(30,30,190,.28)' : 'rgba(215,60,215,.35)');
  const lim = Y(127), a = th.slice(38).map(q => [q[0], Math.min(q[1], lim)]);
  p.between(a, a.map(q => [q[0], lim]), () => 'rgba(20,130,20,.45)');
  const c = rising(ST, '#000', '#e22424');
  p.between(st, sg, i => c[i] === '#000' ? 'rgba(60,200,60,.3)' : 'rgba(230,50,50,.35)');
  p.path(sg, 'stroke="#222" stroke-dasharray="4 3"');
  p.path(td, 'stroke="#222" stroke-width="3" stroke-dasharray="6 5"');
  const tc = rising(TH, '#060690', '#fa0505'); p.segs(th, i => tc[i], 4);
  p.segs(st, i => c[i], 2);
  [[2,147],[7,122],[14,101],[16,110],[25,95],[29,92],[33,98],[38,110],[40,116],[42,128],[49,260],[62,90],[64,82],[70,100],[86,128],[93,122],[98,110],[110,97],[112,105],[120,178],[129,108],[134,157],[139,116]].forEach(q => p.tri(q[0], q[1], false, '#b00808', 4.5));
  [[4,192],[10,156],[15,102],[21,212],[27,100],[32,99],[36,142],[39,118],[41,118],[47,280],[53,312],[63,88],[67,105],[77,296],[89,188],[95,128],[105,242],[111,98],[118,200],[123,235],[133,150],[135,166],[141,126]].forEach(q => p.tri(q[0], q[1], true, '#0808b0', 4.5));
  p.done();
  axis('trenes-axis', 656, 104, [['60', 701], ['40', 719]], [['97,003', 668, '#222', 31], ['80', 682, '#222', 13], ['50', 710, '#0808b0', 13], ['20', 737, '#222', 13], ['0', 753, '#222', 8]]);
}

function drawWilly() {
  const p = plot('willy', 761, 91, 640), { X, Y, px } = p, end = 1601;
  p.years(); p.gridH([784, 816, 832]);
  const band = (list, c) => list.forEach(([a, b]) => p.rect(X(a), 0, X(b), p.h, `fill="${c}"`));
  band([[17.5,23.5],[25.5,27.5],[29.5,30.5],[31.5,32.5],[34.5,36.5],[38.5,39.5],[44.5,45.5],[46.5,48.5],[62.5,64.5],[65.5,69.5],[70.5,71.5],[78.5,80.5],[82.5,83.5],[84.5,85.5],[86.5,88.5],[89.5,92.5],[93.5,95.5],[96.5,97.5],[99.5,100.5],[102.5,103.5],[104.5,107.5],[109.5,111.5],[112.5,113.5],[115.5,117.5],[118.5,119.5],[123.5,125.5],[126.5,128.5],[130.5,132.5],[133.5,136.5],[137.5,138.5],[139.5,142.5]], '#c1c1fb');
  band([[49.5,50.5],[73.5,74.5],[80.5,81.5],[119.5,120.5]], '#c16868');
  band([[51.5,52.5],[55.5,56.5],[59.5,60.5],[74.5,76.5],[121.5,122.5]], '#fda3a3');
  band([[61.5,62.5],[77.5,78.5],[81.5,82.5],[122.5,123.5]], '#68c168');
  const w = p.pts(WILLY, 16), lim = Y(445), clip = w.map(q => [q[0], Math.min(q[1], lim)]);
  p.between(clip, clip.map(q => [q[0], lim]), () => 'rgba(60,150,40,.45)');
  [768, 848].forEach(y => p.hl(y, 28, end, '#000', 'stroke-dasharray="5 3"'));
  [[788, '#9a9ae8', '#0000a0'], [828, '#f4a0a0', '#c80000']].forEach(([y, l, c]) => {
    p.hl(y, 28, end, l, 'stroke-width="4"'); p.hl(y, 28, end, c, 'stroke-width="2"'); });
  p.hl(808, 28, end, '#0808a0', 'stroke-width="2" stroke-dasharray="6 4"');
  p.segs(w, i => {
    const k = i + 16;
    if (k === 51 || k === 75) return '#980808';
    if (ORANGE.includes(k)) return '#ff9d0a';
    return (WILLY[i] + WILLY[i + 1]) / 2 > 447 ? '#0808c8' : '#0bc40b';
  }, 4);
  [49, 73, 80, 119].forEach(k => p.tri(k, 503, false, '#b00808', 6));
  [61, 77, 81, 122].forEach(k => p.tri(k, 506, true, '#0808a8', 6));
  p.done();
  axis('willy-axis', 761, 91, [['0', 767], ['-40', 800], ['-60', 817]], [['-1,3932', 774, '#10c010', 34], ['-25', 788, '#0808a0', 16], ['-50', 808, '#0808a0', 16], ['-75', 828, '#c80000', 16], ['-100', 845, '#222', 21]]);
}

function drawAwesome() {
  const p = plot('awesome', 853, 86, 640), { X, Y, px } = p, zero = Y(784);
  p.years(); p.gridH([864, 882, 919, 937]);
  const bar = (k, t, c, d) => { const x = Math.round(X(k)) - 4, y = Math.round(Y(t)), z = Math.round(zero), a = Math.min(y, z), h = Math.abs(y - z);
    p.add(`<rect class="crisp" x="${x}" y="${a}" width="9" height="${h}" fill="${c}"/><path class="crisp" d="M${x + .5} ${a}v${h}M${x + 8.5} ${a}v${h}" stroke="${d}"/>`); };
  const sc = rising(AS, 'up', 'down');
  AS.forEach((t, i) => { if (i && t < 784 || (i > 50 && i < 54) || (i > 36 && i < 52 && t > 784 && AM[i - 5] < t)) { const up = sc[i - 1] === 'up'; bar(i + 10, t, up ? '#d4ffd4' : '#ffd4d4', up ? '#a8e0a8' : '#ecb4b4'); } });
  const ac = rising(AM, 'up', 'down');
  AM.forEach((t, i) => { if (!i || Math.abs(t - 784) < 2) return; const up = ac[i - 1] === 'up';
    if (t < 784) bar(i + 16, t, up ? '#1010fa' : '#fa10fa', up ? '#0606a8' : '#b008b0');
    else bar(i + 16, t, up ? '#10a0a0' : '#fa1414', up ? '#066060' : '#a00606'); });
  p.hl(901, 28, 1601, '#9a9af8', 'stroke-width="4"'); p.hl(901, 28, 1601, '#0404e8', 'stroke-width="2"');
  p.segs(p.pts(AM, 16), i => ac[i] === 'up' ? '#04042e' : '#b008b0', 4);
  p.segs(p.pts(AS, 10), i => sc[i] === 'up' ? '#68fa68' : '#fd980a', 4);
  [[30,708],[56,833],[80,795],[84,762],[89,765],[107,755],[125,797],[132,755]].forEach(q => p.tri(q[0], q[1], true, '#10eef8', 5));
  [[34,685],[72,733],[81,792],[86,767],[99,740],[109,735],[130,771]].forEach(q => p.tri(q[0], q[1], false, '#f5ee08', 5));
  p.done();
  axis('awesome-axis', 853, 86, [['-1.000', 919], ['-2.000', 933]], [['0', 893, '#1010e0', 8], ['0', 900, '#1010e0', 8], ['0', 907, '#1010e0', 8], ['1.624,4', 871, '#40e040', 33], ['2.194,0', 860, '#1010e0', 33], ['1.624,4', 878, '#40e040', 33]]);
}

function drawBarra() {
  const p = plot('barra', 940, 56, 640), { X, px } = p;
  p.years(); p.gridH([944]);
  p.rect(0, 0, px(1606), p.h, 'fill="#fefe88"');
  [[-2.5,4.5],[8.5,12.5],[14.5,18.5],[25.5,26.5],[27.5,42.5],[43.5,44.5],[45.5,47.5],[49.5,50.5],[64.5,65.5],[69.5,78.5],[80.5,82.5],[85.5,87.5],[92.5,93.5],[99.5,105.5],[111.5,116.5],[117.5,123.5],[130.5,132.5],[140.5,143.5]].forEach(([a, b]) => p.rect(X(a), 0, X(b), p.h, 'fill="#40fc40"'));
  p.hl(969, 28, 1601, '#000');
  p.done();
  axis('barra-axis', 940, 56, [['0,505', 945], ['0,495', 991]], [['0,5000', 969, '#222', 31]]);
}

function drawYears() {
  const p = plot('years', 997, 13, 640);
  for (let y = 0; y <= 42; y++) {
    const x = Math.round(p.X(y * 4));
    p.add(`<path class="crisp" d="M${x + .5} 0v2" stroke="#5e7986"/>`);
    p.text(x, 10, 1990 + y, '#000');
  }
  p.done();
}

// ---- drawing tools of the side bar ----
function buildTools() {
  const plus = (x, y) => `<path d="M${x - 2} ${y}h4M${x} ${y - 2}v4" stroke="#1414e0" stroke-width="1.500"/>`;
  const seg = (c, w = 1.5) => `<path d="M3 18L20 2" stroke="${c}" stroke-width="${w}"/>`;
  const flat = (c, w = 2) => `<path d="M3 10h18" stroke="${c}" stroke-width="${w}"/>`;
  const ray = c => `<circle cx="10" cy="10" r="1.500" fill="none" stroke="${c}"/><path d="M12 10h9" stroke="${c}" stroke-width="2"/>`;
  const oval = c => `<ellipse cx="12" cy="10" rx="7" ry="5" fill="${c}" fill-opacity=".3" stroke="${c}" stroke-width="1.300"/>${plus(5, 15)}${plus(19, 5)}`;
  const bell = '<path d="M6 14c2-2 2-4 2-6 1-5 7-5 8 0 0 2 0 4 2 6z" fill="#f6dc25" stroke="#8a7a10" stroke-width=".7"/><circle cx="12" cy="15.500" r="1.500" fill="#c09a10"/>';
  const t = (x, y, s, c, z = 9) => `<text x="${x}" y="${y}" fill="${c}" style="font:bold ${z}px Liberation Sans">${s}</text>`;
  const icons = {
    Puntero: '<path d="M9 4v11l3-3 2 4 2-1-2-4h3z" fill="#eee" stroke="#666"/>',
    Lupa: '<circle cx="10" cy="8" r="4.500" fill="#c9d8e0" stroke="#445" stroke-width="1.500"/><path d="M13 11l5 6" stroke="#333" stroke-width="2.500"/>',
    'Zoom zona': '<path d="M3 8v9h11M3 8h4" fill="none" stroke="#1d62d8" stroke-dasharray="2 1"/><circle cx="13" cy="8" r="4.500" fill="#c9d8e0" stroke="#445" stroke-width="1.500"/><path d="M16 11l4 5" stroke="#333" stroke-width="2.500"/>',
    'Alarma sobre línea': bell + '<path d="M3 5h13" stroke="#222" stroke-width="1.500"/><path d="M14 2l5 5M19 2l-5 5" stroke="#22d"/><path d="M16 8v8l2-2 1 3 2-1-1-3h2z" fill="#fff" stroke="#777" stroke-width=".5"/>',
    Alarma: bell + '<path d="M5 4l-1 4M19 4l1 4" stroke="#777"/>',
    Extensión: '<path d="M5 13L9 4l4 11h5" fill="none" stroke="#222" stroke-width="1.500"/><path d="M9 7h12" stroke="#f08040" stroke-dasharray="2 1"/>' + plus(5, 8) + t(16, 17, 'F', '#1414e0'),
    Retroceso: '<path d="M7 7h14" stroke="#f08040" stroke-dasharray="3 1"/><path d="M7 10h10" stroke="#44d" stroke-dasharray="3 1"/>' + t(16, 16, 'F', '#1414e0'),
    Rectángulo: '<rect x="6" y="5" width="12" height="9" fill="#9cc3e0" stroke="#6d9df5"/>' + plus(5, 14) + plus(18, 5),
    'Rectángulo rojo': '<rect x="6" y="5" width="12" height="9" fill="#a59aa8" stroke="#f02020" stroke-width="1.500"/>' + plus(5, 14) + plus(18, 5),
    Flecha: '<circle cx="7" cy="14" r="2" fill="none" stroke="#111"/><path d="M8 13l9-8" stroke="#111" stroke-width="2.500"/><path d="M20 3l-7 1 5 6z"/>',
    Texto: '<rect x="5" y="3" width="14" height="14" rx="2" fill="#a9c4d8" stroke="#7aa3ea"/>' + t(8, 14, 'T', '#111', 12),
    Comentario: '<path d="M12 3a7 6 0 1 0 2 13l4 3-1-5A7 6 0 0 0 12 3z" fill="#a9c4d8" stroke="#7aa3ea"/>' + t(8, 14, 'T', '#0a7a1a', 12),
    Segmento: '<circle cx="7" cy="14" r="2" fill="none" stroke="#111"/><circle cx="17" cy="5" r="2" fill="none" stroke="#111"/><path d="M8.500 12.500l7-6" stroke="#111"/>',
    'Rayo verde claro': ray('#7cf07c'), 'Rayo verde': ray('#2fae3f'), 'Rayo verde oscuro': ray('#0a7a1a'), 'Rayo rojo': ray('#f02020'),
    Regla: '<path d="M4 14L17 3l4 4L8 18z" fill="#b5c6d0" stroke="#4e6270"/><path d="M7 12l2 2M10 9l2 2M13 7l2 2" stroke="#4e6270"/>',
    Rango: '<path d="M3 3h18v4H3z" fill="#8fc4a0"/><path d="M3 13h18v4H3z" fill="#c9a0a8"/><path d="M4 14l4-7 4 5 7-6" fill="none" stroke="#dfe8ff" stroke-width="1.500"/>',
    'Elipse roja': oval('#f02020'), 'Elipse marrón': oval('#7a5020'), 'Elipse verde': oval('#168a26'), 'Elipse verde oscuro': oval('#0a6a1a'), 'Elipse verde claro': oval('#20f040'),
    'Línea negra': seg('#111'), 'Línea verde': seg('#2fae3f', 2), 'Línea roja': seg('#f01010', 2),
    'Horizontal negra': flat('#111', 1), 'Horizontal salmón': flat('#f09080'), 'Horizontal lima': flat('#10e820'), 'Horizontal verde': flat('#0a7a1a'), 'Horizontal roja': flat('#f01010'), 'Horizontal azul': flat('#6d9df5'), 'Horizontal marina': flat('#0808a0'),
    Vertical: '<path d="M12 1v18" stroke="#111" stroke-width="1.500"/>',
    Ángulo: '<path d="M16 4L4 16h16" fill="none" stroke="#e06070" stroke-width="1.300"/><path d="M9 9c4 0 5 3 5 7M9 9l4-1" fill="none" stroke="#1414e0" stroke-width="1.500"/>' + t(17, 11, 'α', '#1414e0', 8),
    Círculo: '<circle cx="12" cy="10" r="6" fill="none" stroke="#f08040" stroke-width="1.500"/>' + plus(12, 10) + plus(17, 5),
    'Ondas de impulso': '<path d="M4 17L8 6l4 8 5-11 3 9" fill="none" stroke="#7aa3ea" stroke-dasharray="2 1"/>' + t(2, 9, '1', '#1414e0', 7) + t(7, 8, '3', '#1414e0', 7) + t(9, 18, '2', '#1414e0', 7) + t(14, 7, '5', '#1414e0', 7) + t(16, 14, '4', '#1414e0', 7),
    'Ondas correctivas': '<path d="M6 14l4-8 8 9" fill="none" stroke="#7aa3ea"/>' + plus(7, 11) + plus(14, 6) + t(2, 18, 'a', '#1414e0', 8) + t(16, 8, 'b', '#1414e0', 8) + t(13, 18, 'c', '#1414e0', 8),
    Aceptar: '<path d="M3 11l3-3 4 4 8-10 3 2-11 15z" fill="#4cc252" stroke="#26803a"/>',
    Bien: '<path d="M3 10h4v8H3zM8 10l4-4 1-4c3 0 2 4 1 6h6l-1 10H8z" fill="#3cc24a" stroke="#1f8030"/>',
    Borrar: '<path d="M5 5l3-3 4 4 4-4 4 3-4 5 4 5-4 3-4-4-4 4-3-3 4-5z" fill="#e81818" stroke="#a00808"/>'
  };
  const box = document.getElementById('tools');
  Object.entries(icons).forEach(([name, svg], i) => {
    const b = document.createElement('button');
    b.className = i ? 'tool' : 'tool active'; b.setAttribute('aria-label', name);
    b.innerHTML = `<svg width="24" height="20" viewBox="0 0 24 20">${svg}</svg>`;
    box.append(b);
  });
}

function draw() { drawPrice(); drawTrenes(); drawWilly(); drawAwesome(); drawBarra(); drawYears(); }
buildTools();
draw();
addEventListener('resize', draw);
```
